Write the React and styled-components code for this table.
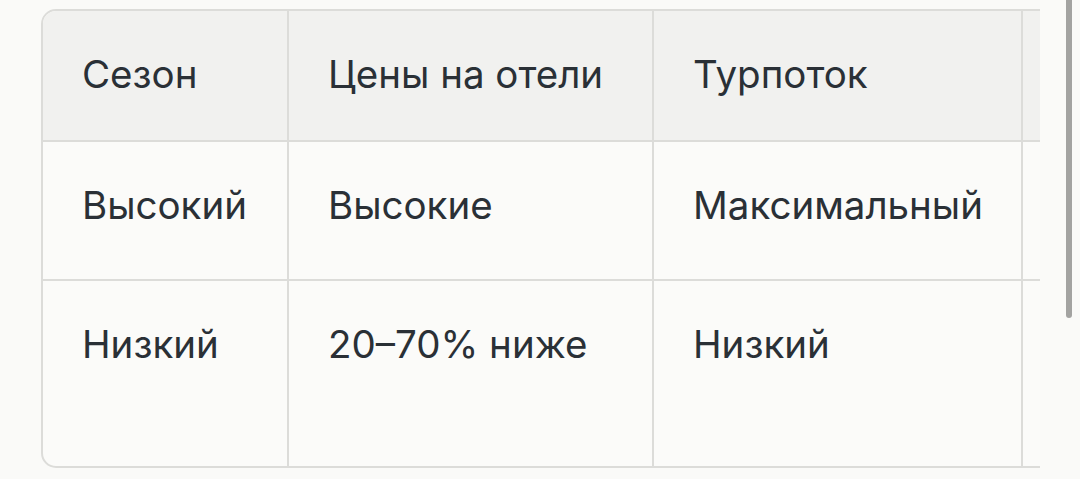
import React from 'react';
import styled, { createGlobalStyle } from 'styled-components';

const GlobalStyle = createGlobalStyle`
  html, body {
    margin: 0;
    padding: 0;
    background: #fafaf8;
    overflow: hidden;
  }
  body {
    font-family: Inter, "Noto Sans", "Liberation Sans", sans-serif;
    color: #2a3036;
  }
`;

const Page = styled.div`
  position: relative;
  width: 1080px;
  height: 479px;
  padding: 9px 0 0 41px;
  box-sizing: border-box;
`;

const Viewport = styled.div`
  width: 999px;
  overflow: hidden;
`;

const Frame = styled.div`
  width: 1320px;
  border: 2px solid #dcdcd9;
  border-radius: 15px;
  overflow: hidden;
  background: #fbfbf9;
`;

const Table = styled.table`
  width: 100%;
  border-collapse: separate;
  border-spacing: 0;
  table-layout: fixed;
`;

const Cell = styled.td`
  box-sizing: border-box;
  vertical-align: top;
  text-align: left;
  padding: 40px 20px 0 39px;
  font-size: 38.5px;
  font-weight: 400;
  line-height: 1.2;
  white-space: nowrap;
  color: #2a3036;
  height: ${(p) => p.h}px;
  background: ${(p) => (p.head ? '#f1f1ef' : 'transparent')};
  border-right: 2px solid #dcdcd9;
  border-bottom: ${(p) => (p.last ? 'none' : '2px solid #dcdcd9')};
`;

const Scrollbar = styled.div`
  position: absolute;
  top: 0;
  left: 1066px;
  width: 6px;
  height: 318px;
  border-radius: 0 0 4px 4px;
  background: #a3a3a1;
`;

const widths = [246, 365, 369, 340];

const rows = [
  { head: true, h: 131, cells: ['Сезон', 'Цены на отели', 'Турпоток', ''] },
  { h: 139, cells: ['Высокий', 'Высокие', 'Максимальный', ''] },
  { h: 185, last: true, cells: ['Низкий', '20–70% ниже', 'Низкий', ''] },
];

export default function App() {
  return (
    <>
      <GlobalStyle />
      <Page>
        <Viewport>
          <Frame>
            <Table>
              <colgroup>
                {widths.map((w, i) => (
                  <col key={i} style={{ width: w }} />
                ))}
              </colgroup>
              <tbody>
                {rows.map((r, i) => (
                  <tr key={i}>
                    {r.cells.map((c, j) => (
                      <Cell key={j} as={r.head ? 'th' : 'td'} head={r.head} last={r.last} h={r.h}>
                        {c}
                      </Cell>
                    ))}
                  </tr>
                ))}
              </tbody>
            </Table>
          </Frame>
        </Viewport>
        <Scrollbar />
      </Page>
    </>
  );
}
